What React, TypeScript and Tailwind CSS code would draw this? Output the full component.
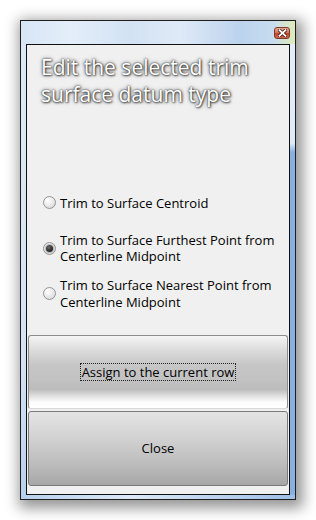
import React from "react";

const options = [
  { label: ["Trim to Surface Centroid"], checked: false },
  { label: ["Trim to Surface Furthest Point from", "Centerline Midpoint"], checked: true },
  { label: ["Trim to Surface Nearest Point from", "Centerline Midpoint"], checked: false },
];

function Radio({ checked }: { checked: boolean }) {
  return (
    <span
      className={`
        flex size-[13px] shrink-0 items-center justify-center rounded-full
        border border-[#959595]
        bg-[radial-gradient(circle_at_35%_30%,#ffffff_0%,#ececec_45%,#cfcfcf_100%)]
      `}
    >
      {checked && (
        <span
          className={`
            size-[7px] rounded-full
            bg-[radial-gradient(circle_at_40%_35%,#6a6a6a_0%,#2a2a2a_60%,#111_100%)]
            shadow-[0_0_1px_1px_rgba(120,120,120,0.5)]
          `}
        />
      )}
    </span>
  );
}

function CloseGlyph() {
  return (
    <svg width="9" height="8" viewBox="0 0 9 8">
      <path d="M1.5 1.2 L7.5 6.8 M7.5 1.2 L1.5 6.8" stroke="#4a2118" strokeWidth="3.4" strokeLinecap="square" />
      <path d="M1.5 1.2 L7.5 6.8 M7.5 1.2 L1.5 6.8" stroke="#ffffff" strokeWidth="1.8" strokeLinecap="square" />
    </svg>
  );
}

export default function App() {
  return (
    <div className="h-[520px] w-[316px] bg-white pt-[20px] pl-[20px]">
      {/* window frame */}
      <div
        className={`
          flex h-[480px] w-[276px] flex-col border border-[#1e1e1e]
          bg-[linear-gradient(to_bottom,#dbe8f6,#cfe0f3)]
          shadow-[3px_4px_13px_4px_rgba(0,0,0,0.42)]
        `}
      >
        {/* title bar */}
        <div
          className={`
            flex h-[23px] justify-end pt-[6px] pr-[5px]
            bg-[linear-gradient(90deg,#d6e5f5_0%,#e4eefa_18%,#d2e2f3_40%,#dfeaf7_58%,#bcd3ee_80%,#c7dcef_92%,#dfeab8_100%)]
          `}
        >
          <div
            className={`
              flex h-[12px] w-[16px] items-center justify-center rounded-[3px]
              border border-[#7b3a2c]
              bg-[linear-gradient(to_bottom,#e9a994_0%,#d7745d_45%,#c4452b_55%,#d0634a_100%)]
            `}
          >
            <CloseGlyph />
          </div>
        </div>

        <div className="flex">
          <div className="w-[5px] bg-[linear-gradient(to_bottom,#dbe8f6_0%,#d3e3f4_70%,#b9d0ec_100%)]" />

          {/* client area */}
          <div
            className={`
              flex h-[451px] w-[264px] flex-col border border-[#111]
              bg-[#f0f0f0] font-['Open_Sans',sans-serif]
            `}
          >
            <h1
              className={`
                pt-[9px] pl-[14px] text-[21px] leading-[27px] font-normal
                text-white
                [text-shadow:0_0_2px_rgba(0,0,0,0.85),0_0_4px_rgba(0,0,0,0.55),1px_1px_2px_rgba(0,0,0,0.5)]
              `}
            >
              Edit the selected trim
              <br />
              surface datum type
            </h1>

            <div className="mt-[72px] flex flex-col">
              {options.map((o, i) => (
                <div key={i} className="flex h-[45.5px] items-center gap-[4px] pl-[16px]">
                  <Radio checked={o.checked} />
                  <span className="text-[13px] leading-[16.5px] text-black">
                    {o.label.map((l, j) => (
                      <span key={j} className="block whitespace-nowrap">
                        {l}
                      </span>
                    ))}
                  </span>
                </div>
              ))}
            </div>

            <div className="mt-auto flex flex-col gap-[2px] px-px pb-[8px]">
              <button
                className={`
                  flex h-[74px] items-center justify-center rounded-[3px]
                  border border-[#8c8c8c] border-b-[#d8d8d8]
                  bg-[linear-gradient(to_bottom,#f4f4f4_0%,#dedede_18%,#c6c6c6_40%,#c2c2c2_60%,#bcbcbc_74%,#e2e2e2_84%,#fcfcfc_92%,#ffffff_100%)]
                  text-[13px] text-black
                `}
              >
                <span className="border border-dotted border-[#222] px-[1px] leading-[16px]">
                  Assign to the current row
                </span>
              </button>
              <button
                className={`
                  flex h-[75px] items-center justify-center rounded-[3px]
                  border border-[#7a7a7a]
                  bg-[linear-gradient(to_bottom,#e4e4e4_0%,#d2d2d2_35%,#bdbdbd_70%,#a7a7a7_100%)]
                  text-[13px] text-black
                `}
              >
                Close
              </button>
            </div>
          </div>

          <div className="w-[5px] bg-[linear-gradient(to_bottom,#e3edf9_0%,#dfeaf7_22%,#88afe0_24%,#8ab0e0_100%)]" />
        </div>

        <div className="h-[4px] bg-[linear-gradient(90deg,#b7cfec,#dce8f6_40%,#9fbfe6)]" />
      </div>
    </div>
  );
}
